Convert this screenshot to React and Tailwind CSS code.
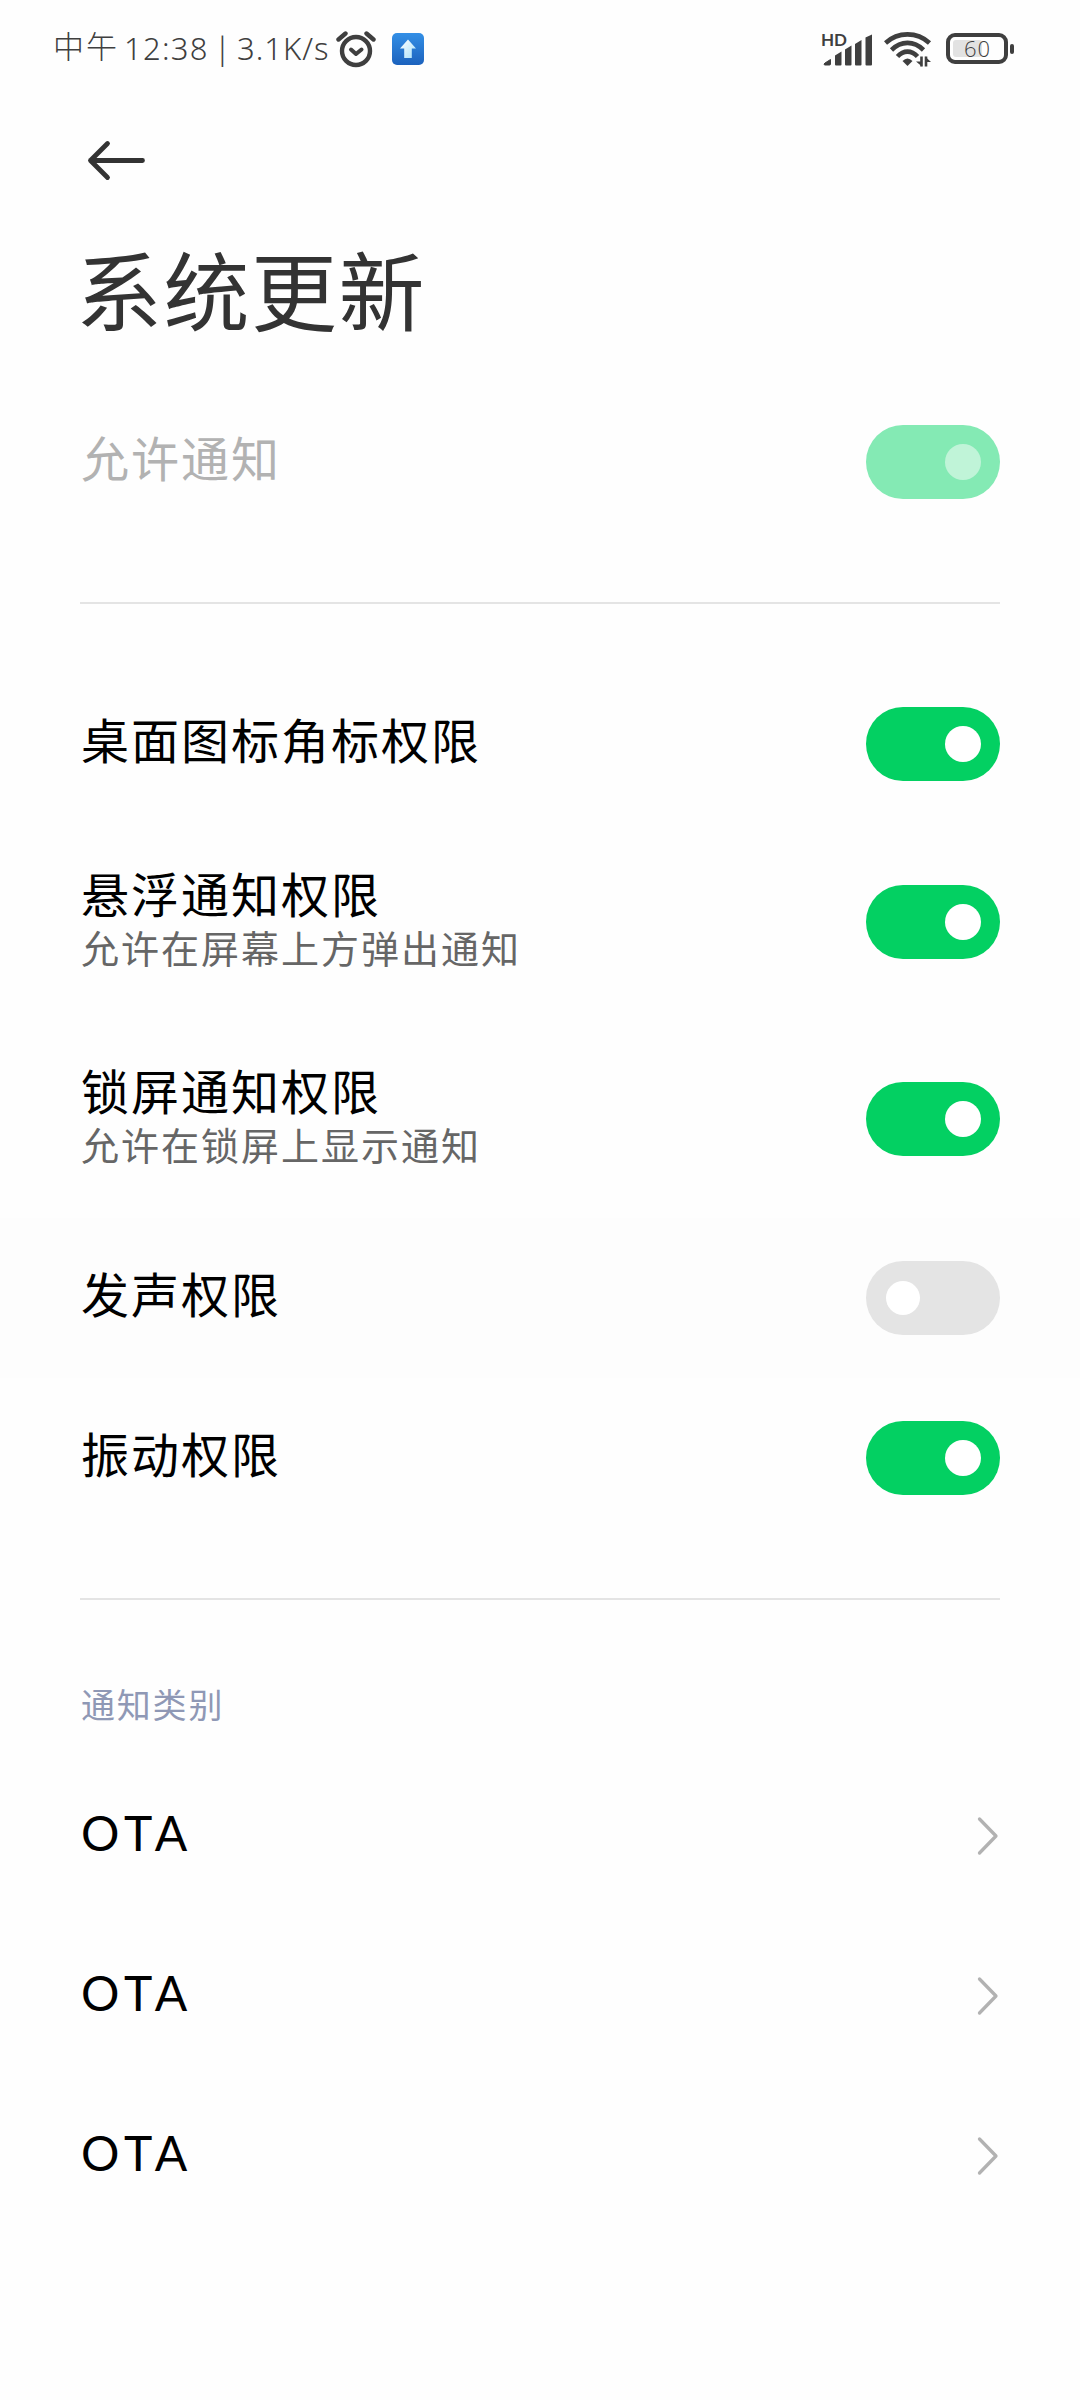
const latin = "font-['Lato','Noto_Sans_CJK_SC',sans-serif]";
const cjk = "font-['Liberation_Sans','Noto_Sans_CJK_SC',sans-serif]";

function Switch({ state }) {
  const track =
    state === 'disabled' ? 'bg-[#84eab4] justify-end pr-[19px]'
      : state === 'off' ? 'bg-[#e4e4e4] justify-start pl-5'
        : 'bg-[#03d062] justify-end pr-[19px]';
  const knob =
    state === 'disabled' ? 'size-9 bg-[#c0f4d8]'
      : state === 'off' ? 'size-[34px] bg-white'
        : 'size-9 bg-white';
  return (
    <div className={`flex h-[74px] w-[134px] shrink-0 items-center rounded-full ${track}`}>
      <div className={`rounded-full ${knob}`} />
    </div>
  );
}

function SettingRow({ label, hint, state = 'on' }) {
  const height = hint ? 'h-[197px] pb-px' : 'h-40';
  const bg = state === 'off' ? 'bg-[#fdfdfd]' : '';
  const color = state === 'disabled' ? 'text-[#b2b2b2]' : 'text-black';
  return (
    <div className={`flex items-center justify-between px-20 ${height} ${bg}`}>
      <div className={hint ? 'pt-0.5' : 'pb-1'}>
        <div className={`h-[54px] pl-px text-[48px] leading-[56px] tracking-[2px] ${color}`}>{label}</div>
        {hint && (
          <div className="h-[54px] pl-px text-[38px] leading-[54px] tracking-[2px] text-[#666]">{hint}</div>
        )}
      </div>
      <Switch state={state} />
    </div>
  );
}

function CategoryRow({ label }) {
  return (
    <div className="flex h-40 items-center justify-between px-20">
      <div className={`pb-1.5 pl-px text-[48px] leading-[54px] tracking-[6px] text-black ${latin}`}>{label}</div>
      <svg className="mr-px h-10 w-6" viewBox="0 0 24 40" fill="none" stroke="#b2b2b2" strokeWidth="3.300" strokeLinecap="round" strokeLinejoin="round">
        <path d="M4.500 3 21 20 4.500 37" />
      </svg>
    </div>
  );
}

function AlarmIcon() {
  return (
    <svg className="h-10 w-10" viewBox="0 0 40 40" fill="none" stroke="#3f3f3f" strokeLinecap="round" strokeLinejoin="round">
      <circle cx="20" cy="22" r="14" strokeWidth="4.400" />
      <path d="M2.500 10.500 9.500 4.500M37.500 10.500 30.500 4.500" strokeWidth="4.400" />
      <path d="M15 20.500 20 25 25.500 20.500" strokeWidth="4" />
    </svg>
  );
}

function UploadIcon() {
  return (
    <svg className="size-8" viewBox="0 0 32 32">
      <defs>
        <linearGradient id="badge" x1="0" y1="0" x2="0" y2="1">
          <stop offset="0" stopColor="#338fe6" />
          <stop offset="1" stopColor="#1c62bd" />
        </linearGradient>
        <linearGradient id="arrow" x1="0" y1="0" x2="1" y2="1">
          <stop offset="0" stopColor="#fff" />
          <stop offset="1" stopColor="#a9e1fa" />
        </linearGradient>
      </defs>
      <rect width="32" height="32" rx="5" fill="url(#badge)" />
      <path d="M16 6.500 24 15.500H19.800V25H12.200V15.500H8Z" fill="url(#arrow)" />
    </svg>
  );
}

function SignalIcon() {
  return (
    <svg className="h-9 w-[52px]" viewBox="0 0 52 36" fill="#3f3f3f">
      <path d="M3 32 8.500 28.500V33Q8.500 34 7.500 34H3Q2 34 2 33Z" stroke="#3f3f3f" strokeWidth="1" />
      <path d="M13 24.500 19.500 20.500V33.500Q19.500 34.500 18.500 34.500H14Q13 34.500 13 33.500Z" />
      <path d="M23 18.500 29.500 14.500V33.500Q29.500 34.500 28.500 34.500H24Q23 34.500 23 33.500Z" />
      <path d="M33 13 39.500 9V33.500Q39.500 34.500 38.500 34.500H34Q33 34.500 33 33.500Z" />
      <path d="M43.500 6.500 50 3.500V33.500Q50 34.500 49 34.500H44.500Q43.500 34.500 43.500 33.500Z" />
    </svg>
  );
}

function WifiIcon() {
  return (
    <svg className="h-9 w-12" viewBox="0 0 48 36" fill="none" stroke="#3f3f3f" strokeWidth="4.600">
      <path d="M1.500 12C14 .5 33 .5 45.500 12" />
      <path d="M7.500 19C17 9.500 30 9.500 39.500 19" />
      <path d="M13.500 25.500C19.500 19 27.500 19 33.500 25.500" />
      <path d="M18.500 30Q23.500 25 28.500 30L23.500 35Z" fill="#3f3f3f" stroke="none" />
      <path d="M37.500 25.500V35.500M42 25.500V35.500" strokeWidth="2.600" />
      <path d="M32 30.500H38V35.500ZM41 25.500 47 31H41Z" fill="#3f3f3f" stroke="none" />
    </svg>
  );
}

function Battery() {
  return (
    <div className="flex items-center gap-0.5">
      <div className="flex h-[31px] w-[62px] items-center rounded-[9px] border-4 border-[#3f3f3f] px-[3px]">
        <div className="h-[17px] w-[29px] rounded-[3px] bg-[#e2e2e2]" />
        <div className="-ml-[18px] pb-0.5 font-['Open_Sans',sans-serif] text-[22px] leading-none font-light tracking-[1px] text-[#3f3f3f]">60</div>
      </div>
      <div className="h-2.5 w-1 rounded-full bg-[#3f3f3f]" />
    </div>
  );
}

function StatusBar() {
  return (
    <div className="flex h-24 items-center pt-px pr-[66px] pl-[53px] text-[#3f3f3f]">
      <div className="flex items-center pb-px font-['Noto_Sans','Noto_Sans_CJK_SC',sans-serif] text-[31px] leading-10 font-light">
        <span className={`w-[71px] tracking-[2px] ${cjk}`}>中午</span>
        <span className="w-[90px] tracking-[1.300px]">12:38</span>
        <span className="w-[23px]">|</span>
        <span className="w-[97px] tracking-[1px]">3.1K/s</span>
      </div>
      <div className="ml-[2px] flex items-center gap-4">
        <AlarmIcon />
        <UploadIcon />
      </div>
      <div className="ml-auto flex items-center">
        <div className="relative">
          <SignalIcon />
          <span className="absolute top-0 -left-px font-['Lato',sans-serif] text-[17px] leading-none font-bold">HD</span>
        </div>
        <div className="ml-[10px]"><WifiIcon /></div>
        <div className="ml-[14px]"><Battery /></div>
      </div>
    </div>
  );
}

function Divider() {
  return <div className="mx-20 my-15 h-0.5 bg-[#e4e4e4]" />;
}

export default function App() {
  return (
    <div className={`h-[2400px] w-[1080px] overflow-hidden bg-[#fefefe] ${cjk}`}>
      <StatusBar />
      <header className="flex h-[286px] flex-col px-20">
        <svg className="mt-10 ml-1.5 h-12 w-16" viewBox="0 0 64 48" fill="none" stroke="#333" strokeWidth="4.800" strokeLinecap="round" strokeLinejoin="round">
          <path d="M56.500 24.500H4.500M21.500 7.500 4.500 24.500 21.500 41.500" />
        </svg>
        <h1 className="mt-[51px] -ml-1 text-[86px] leading-[120px] font-normal tracking-[1.500px] text-[#333]">系统更新</h1>
      </header>
      <SettingRow label="允许通知" state="disabled" />
      <Divider />
      <SettingRow label="桌面图标角标权限" />
      <SettingRow label="悬浮通知权限" hint="允许在屏幕上方弹出通知" />
      <SettingRow label="锁屏通知权限" hint="允许在锁屏上显示通知" />
      <SettingRow label="发声权限" state="off" />
      <SettingRow label="振动权限" />
      <Divider />
      <div className="-mt-5 h-[116px] px-20 pt-10 pl-[81px] text-[34px] leading-[52px] tracking-[1.800px] text-[#8f98b5]">通知类别</div>
      <CategoryRow label="OTA" />
      <CategoryRow label="OTA" />
      <CategoryRow label="OTA" />
    </div>
  );
}
